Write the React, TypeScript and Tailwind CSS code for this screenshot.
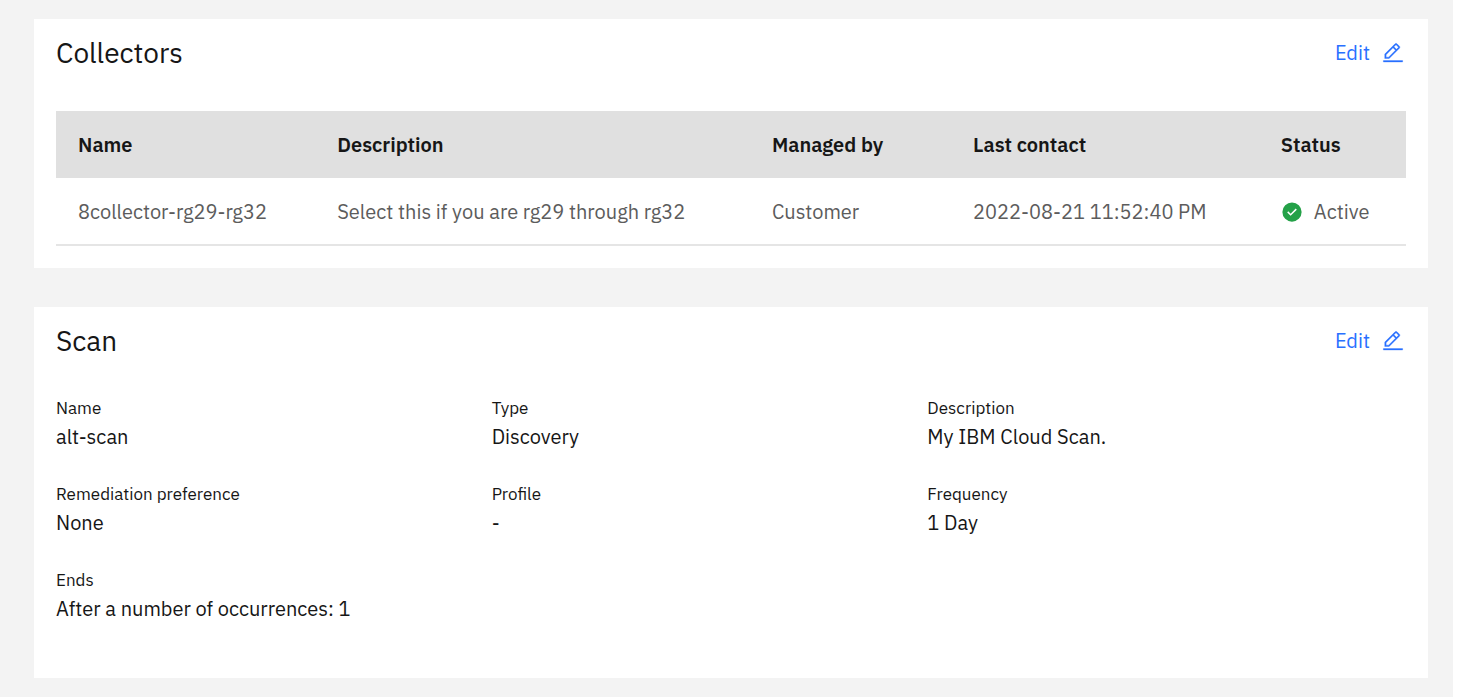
import React from "react";

const collectors = [
  {
    name: "8collector-rg29-rg32",
    description: "Select this if you are rg29 through rg32",
    managedBy: "Customer",
    lastContact: "2022-08-21 11:52:40 PM",
    status: "Active",
  },
];

const scanFields = [
  { label: "Name", value: "alt-scan" },
  { label: "Type", value: "Discovery" },
  { label: "Description", value: "My IBM Cloud Scan." },
  { label: "Remediation preference", value: "None" },
  { label: "Profile", value: "-" },
  { label: "Frequency", value: "1 Day" },
  { label: "Ends", value: "After a number of occurrences: 1" },
];

function EditIcon() {
  return (
    <svg
      className="size-[22px]"
      viewBox="0 0 32 32"
      fill="currentColor"
      stroke="currentColor"
      strokeWidth="0.5"
      aria-hidden="true"
    >
      <path d="M2 27h28v2H2zM25.4 9c.8-.8.8-2 0-2.8l-3.600-3.600c-.8-.8-2-.8-2.800 0l-15 15V24h6.400l15-15zM20.400 4L24 7.600l-3 3L17.400 7l3-3zM6 22v-3.600l10-10 3.600 3.600-10 10H6z" />
    </svg>
  );
}

function CheckIcon() {
  return (
    <svg className="size-[22px]" viewBox="0 0 32 32" aria-hidden="true">
      <path
        fill="#24a148"
        d="M16 2a14 14 0 1 0 14 14A14 14 0 0 0 16 2zm-2 19.590l-5-5L10.590 15 14 18.410 21.410 11 23 12.580z"
      />
    </svg>
  );
}

function PanelHeader({ title }: { title: string }) {
  return (
    <div className="flex items-center justify-between">
      <h2 className="text-[28px] leading-9">{title}</h2>
      <button type="button" className="flex items-center gap-3 pr-0.5 text-xl leading-7 text-[#2970ff]">
        Edit
        <EditIcon />
      </button>
    </div>
  );
}

export default function App() {
  return (
    <div className="flex min-h-screen bg-white pr-1 pb-0.5 font-['IBM_Plex_Sans','Inter',sans-serif] text-[#161616]">
      <main className="flex grow flex-col gap-[39px] bg-[#f3f3f3] pt-[19px] pr-[25px] pb-[19px] pl-[34px]">
        <section className="bg-white px-[22px] pt-4 pb-[22px]">
          <PanelHeader title="Collectors" />
          <table className="mt-10 w-full table-fixed text-left text-xl leading-7">
            <colgroup>
              <col className="w-[19.2%]" />
              <col className="w-[32.2%]" />
              <col className="w-[14.9%]" />
              <col className="w-[22.8%]" />
              <col />
            </colgroup>
            <thead className="bg-[#e0e0e0]">
              <tr className="h-[67px]">
                {["Name", "Description", "Managed by", "Last contact", "Status"].map((heading) => (
                  <th key={heading} scope="col" className="pl-[22px] font-semibold">
                    {heading}
                  </th>
                ))}
              </tr>
            </thead>
            <tbody className="text-[#5c5c5c]">
              {collectors.map((row) => (
                <tr key={row.name} className="h-[67px] border-b-2 border-[#e5e5e5]">
                  <td className="pt-0.5 pl-[22px]">{row.name}</td>
                  <td className="pt-0.5 pl-[22px]">{row.description}</td>
                  <td className="pt-0.5 pl-[22px]">{row.managedBy}</td>
                  <td className="pt-0.5 pl-[22px]">{row.lastContact}</td>
                  <td className="pt-0.5 pl-[22px]">
                    <span className="flex items-center gap-[11px]">
                      <CheckIcon />
                      {row.status}
                    </span>
                  </td>
                </tr>
              ))}
            </tbody>
          </table>
        </section>

        <section className="bg-white px-[22px] pt-4 pb-[53px]">
          <PanelHeader title="Scan" />
          <dl className="mt-9 grid grid-cols-[436fr_436fr_479fr] gap-y-7">
            {scanFields.map((field) => (
              <div key={field.label}>
                <dt className="text-[17px] leading-[26px]">{field.label}</dt>
                <dd className="text-xl leading-8">{field.value}</dd>
              </div>
            ))}
          </dl>
        </section>
      </main>
    </div>
  );
}
